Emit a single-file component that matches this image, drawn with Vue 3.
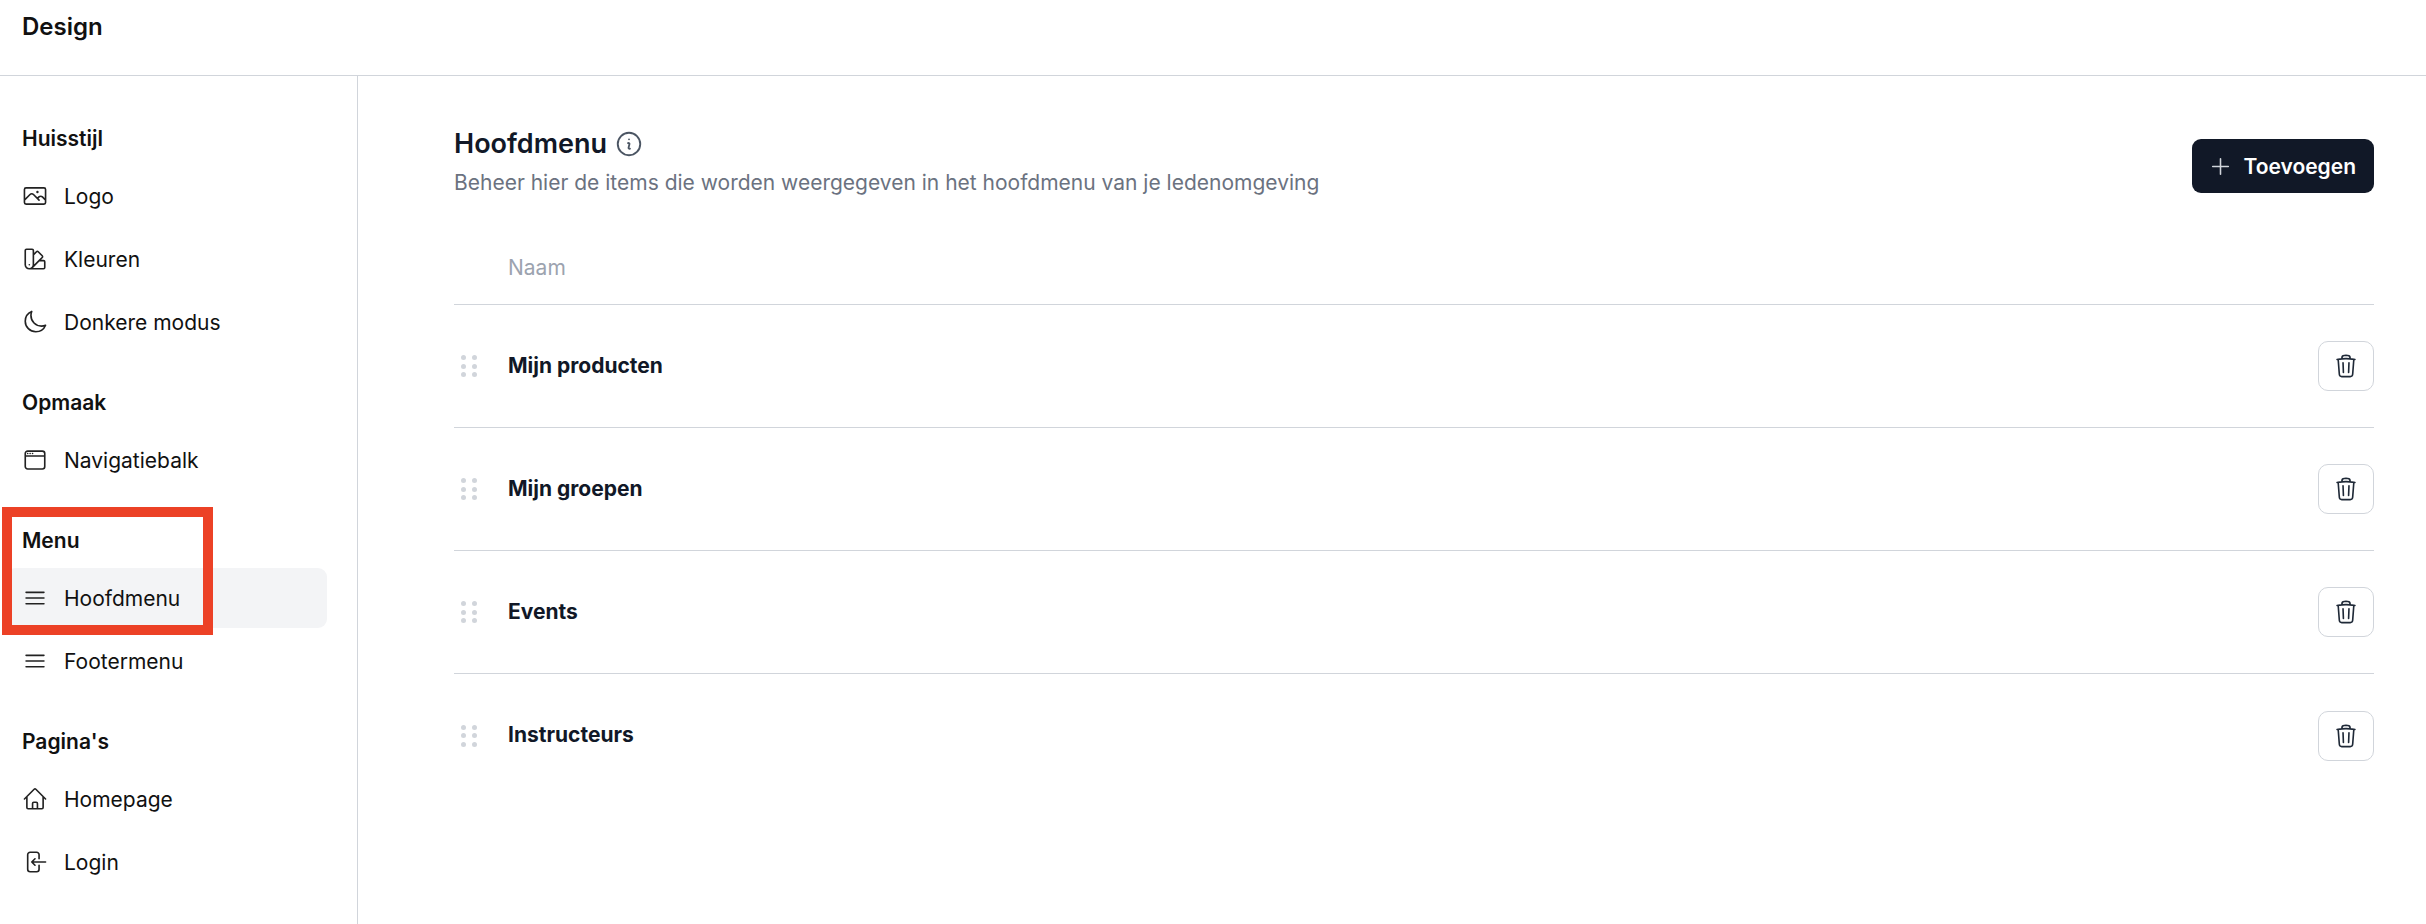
<script setup>
const P = {
  photo: 'm2.25 15.75 5.159-5.159a2.25 2.25 0 0 1 3.182 0l5.159 5.159m-1.5-1.5 1.409-1.409a2.25 2.25 0 0 1 3.182 0l2.909 2.909m-18 3.75h16.5a1.5 1.5 0 0 0 1.5-1.5V6a1.5 1.5 0 0 0-1.5-1.5H3.75A1.5 1.5 0 0 0 2.25 6v12a1.5 1.5 0 0 0 1.5 1.5Zm10.5-11.25h.008v.008h-.008V8.25Zm.375 0a.375.375 0 1 1-.75 0 .375.375 0 0 1 .75 0Z',
  swatch: 'M4.098 19.902a3.75 3.75 0 0 0 5.304 0l6.401-6.402M6.75 21A3.75 3.75 0 0 1 3 17.25V4.125C3 3.504 3.504 3 4.125 3h5.25c.621 0 1.125.504 1.125 1.125v4.072M6.75 21a3.75 3.75 0 0 0 3.75-3.75V8.197M6.75 21h13.125c.621 0 1.125-.504 1.125-1.125v-5.25c0-.621-.504-1.125-1.125-1.125h-4.072M10.5 8.197l2.88-2.88c.438-.439 1.15-.439 1.59 0l3.712 3.713c.44.44.44 1.152 0 1.59l-2.879 2.88M6.75 17.25h.008v.008H6.75v-.008Z',
  moon: 'M21.752 15.002A9.72 9.72 0 0 1 18 15.75c-5.385 0-9.75-4.365-9.75-9.75 0-1.33.266-2.597.748-3.752A9.753 9.753 0 0 0 3 11.25C3 16.635 7.365 21 12.75 21a9.753 9.753 0 0 0 9.002-5.998Z',
  window: 'M3 8.25V18a2.25 2.25 0 0 0 2.25 2.25h13.5A2.25 2.25 0 0 0 21 18V8.25m-18 0V6a2.25 2.25 0 0 1 2.25-2.25h13.5A2.25 2.25 0 0 1 21 6v2.25m-18 0h18M5.25 6h.008v.008H5.25V6ZM7.5 6h.008v.008H7.5V6Zm2.25 0h.008v.008H9.75V6Z',
  bars: 'M3.75 6.75h16.5M3.75 12h16.5m-16.5 5.25h16.5',
  home: 'm2.25 12 8.954-8.955c.44-.439 1.152-.439 1.591 0L21.75 12M4.5 9.75v10.125c0 .621.504 1.125 1.125 1.125H9.75v-4.875c0-.621.504-1.125 1.125-1.125h2.25c.621 0 1.125.504 1.125 1.125V21h4.125c.621 0 1.125-.504 1.125-1.125V9.75M8.25 21h8.25',
  login: 'M15.75 9V5.25A2.25 2.25 0 0 0 13.5 3h-6a2.25 2.25 0 0 0-2.25 2.25v13.5A2.25 2.25 0 0 0 7.5 21h6a2.25 2.25 0 0 0 2.25-2.25V15M12 9l-3 3m0 0 3 3m-3-3h12.75',
  info: 'm11.25 11.25.041-.02a.75.75 0 0 1 1.063.852l-.708 2.836a.75.75 0 0 0 1.063.853l.041-.021M21 12a9 9 0 1 1-18 0 9 9 0 0 1 18 0Zm-9-3.75h.008v.008H12V8.25Z',
  trash: 'm14.74 9-.346 9m-4.788 0L9.26 9m9.968-3.21c.342.052.682.107 1.022.166m-1.022-.165L18.16 19.673a2.25 2.25 0 0 1-2.244 2.077H8.084a2.25 2.25 0 0 1-2.244-2.077L4.772 5.79m14.456 0a48.108 48.108 0 0 0-3.478-.397m-12 .562c.34-.059.68-.114 1.022-.165m0 0a48.11 48.11 0 0 1 3.478-.397m7.5 0v-.916c0-1.18-.91-2.164-2.09-2.201a51.964 51.964 0 0 0-3.32 0c-1.18.037-2.09 1.022-2.09 2.201v.916m7.5 0a48.667 48.667 0 0 0-7.5 0',
  plus: 'M12 4.5v15m7.5-7.5h-15'
}
const sections = [
  { title: 'Huisstijl', items: [
    { label: 'Logo', icon: 'photo' },
    { label: 'Kleuren', icon: 'swatch' },
    { label: 'Donkere modus', icon: 'moon' }
  ] },
  { title: 'Opmaak', items: [{ label: 'Navigatiebalk', icon: 'window' }] },
  { title: 'Menu', items: [
    { label: 'Hoofdmenu', icon: 'bars', active: true },
    { label: 'Footermenu', icon: 'bars' }
  ] },
  { title: "Pagina's", items: [
    { label: 'Homepage', icon: 'home' },
    { label: 'Login', icon: 'login' }
  ] }
]
const rows = ['Mijn producten', 'Mijn groepen', 'Events', 'Instructeurs']
</script>

<template>
  <div class="page">
    <header class="topbar"><span class="brand">Design</span></header>
    <div class="body">
      <aside class="sidebar">
        <section v-for="s in sections" :key="s.title" class="group">
          <h3 class="group-title">{{ s.title }}</h3>
          <ul class="nav">
            <li v-for="i in s.items" :key="i.label" class="nav-item" :class="{ active: i.active }">
              <svg class="nav-icon" viewBox="0 0 24 24" fill="none" stroke="currentColor" stroke-width="1.5" stroke-linecap="round" stroke-linejoin="round"><path :d="P[i.icon]" /></svg>
              <span>{{ i.label }}</span>
            </li>
          </ul>
        </section>
      </aside>
      <main class="main">
        <div class="head">
          <div>
            <div class="title-row">
              <h1 class="title">Hoofdmenu</h1>
              <svg class="info" viewBox="0 0 24 24" fill="none" stroke="currentColor" stroke-width="1.5" stroke-linecap="round" stroke-linejoin="round"><path :d="P.info" /></svg>
            </div>
            <p class="sub">Beheer hier de items die worden weergegeven in het hoofdmenu van je ledenomgeving</p>
          </div>
          <button class="add">
            <svg class="plus" viewBox="0 0 24 24" fill="none" stroke="currentColor" stroke-width="1.5" stroke-linecap="round" stroke-linejoin="round"><path :d="P.plus" /></svg>
            <span>Toevoegen</span>
          </button>
        </div>
        <div class="col-head">Naam</div>
        <div v-for="r in rows" :key="r" class="row">
          <div class="grip"><i v-for="n in 6" :key="n"></i></div>
          <span class="row-name">{{ r }}</span>
          <button class="del">
            <svg class="trash" viewBox="0 0 24 24" fill="none" stroke="currentColor" stroke-width="1.5" stroke-linecap="round" stroke-linejoin="round"><path :d="P.trash" /></svg>
          </button>
        </div>
      </main>
    </div>
    <div class="highlight-frame"></div>
  </div>
</template>

<style scoped>
.page {
  position: relative;
  width: 2426px;
  height: 924px;
  overflow: hidden;
  background: #fff;
  color: #111827;
  font-family: Inter, "Liberation Sans", sans-serif;
  display: flex;
  flex-direction: column;
}
.topbar {
  height: 76px;
  flex: none;
  box-sizing: border-box;
  border-bottom: 1px solid #d1d5db;
  padding: 9px 22px 0;
}
.brand {
  display: block;
  font-size: 24px;
  line-height: 36px;
  font-weight: 600;
  color: #111;
}
.body { flex: 1; display: flex; min-height: 0; }
.sidebar {
  width: 358px;
  flex: none;
  box-sizing: border-box;
  border-right: 1px solid #d1d5db;
  padding: 48px 30px 0 6px;
  color: #111;
}
.group { margin-bottom: 36px; }
.group-title {
  margin: 0 0 12px 16px;
  font-size: 21px;
  line-height: 30px;
  font-weight: 600;
}
.nav { list-style: none; margin: 0; padding: 0; display: flex; flex-direction: column; gap: 3px; }
.nav-item {
  height: 60px;
  display: flex;
  align-items: center;
  gap: 16px;
  padding-left: 16px;
  border-radius: 9px;
  font-size: 21px;
}
.nav-item.active { background: #f3f4f6; }
.nav-icon { width: 26px; height: 26px; flex: none; color: #222; }
.main { flex: 1; min-width: 0; padding: 48px 52px 0 96px; }
.head { display: flex; justify-content: space-between; align-items: flex-start; height: 74px; }
.title-row { display: flex; align-items: center; gap: 7px; }
.title { margin: 0; font-size: 27px; line-height: 40px; font-weight: 600; }
.info { width: 30px; height: 30px; color: #4b5563; }
.sub { margin: 4px 0 0; font-size: 21px; line-height: 30px; color: #6b7280; }
.add {
  display: flex;
  align-items: center;
  gap: 10px;
  height: 54px;
  margin-top: 15px;
  padding: 0 18px 0 16px;
  border: none;
  border-radius: 9px;
  background: #111827;
  color: #fff;
  font: 600 21px Inter, sans-serif;
}
.plus { width: 25px; height: 25px; color: #d1d5db; }
.col-head {
  margin-top: 30px;
  height: 77px;
  box-sizing: border-box;
  padding: 25px 0 0 54px;
  line-height: 30px;
  font-size: 21px;
  color: #9ca3af;
  border-bottom: 1px solid #d1d5db;
}
.row {
  height: 123px;
  box-sizing: border-box;
  display: flex;
  align-items: center;
  border-bottom: 1px solid #d1d5db;
}
.row:last-child { border-bottom: none; }
.grip {
  width: 54px;
  flex: none;
  box-sizing: border-box;
  padding-left: 7px;
  display: grid;
  grid-template-columns: 5px 5px;
  column-gap: 6px;
  row-gap: 3.5px;
}
.grip i { display: block; width: 5px; height: 5px; border-radius: 50%; background: #d1d5db; }
.row-name { flex: 1; font-size: 21px; font-weight: 650; padding-bottom: 2px; }
.del {
  width: 56px;
  height: 50px;
  display: flex;
  align-items: center;
  justify-content: center;
  padding: 0;
  background: #fff;
  border: 1px solid #d1d5db;
  border-radius: 10px;
  color: #1f2937;
}
.trash { width: 26px; height: 26px; }
.highlight-frame {
  position: absolute;
  left: 2px;
  top: 507px;
  width: 211px;
  height: 128px;
  box-sizing: border-box;
  border: 10px solid #ec4126;
}
</style>
